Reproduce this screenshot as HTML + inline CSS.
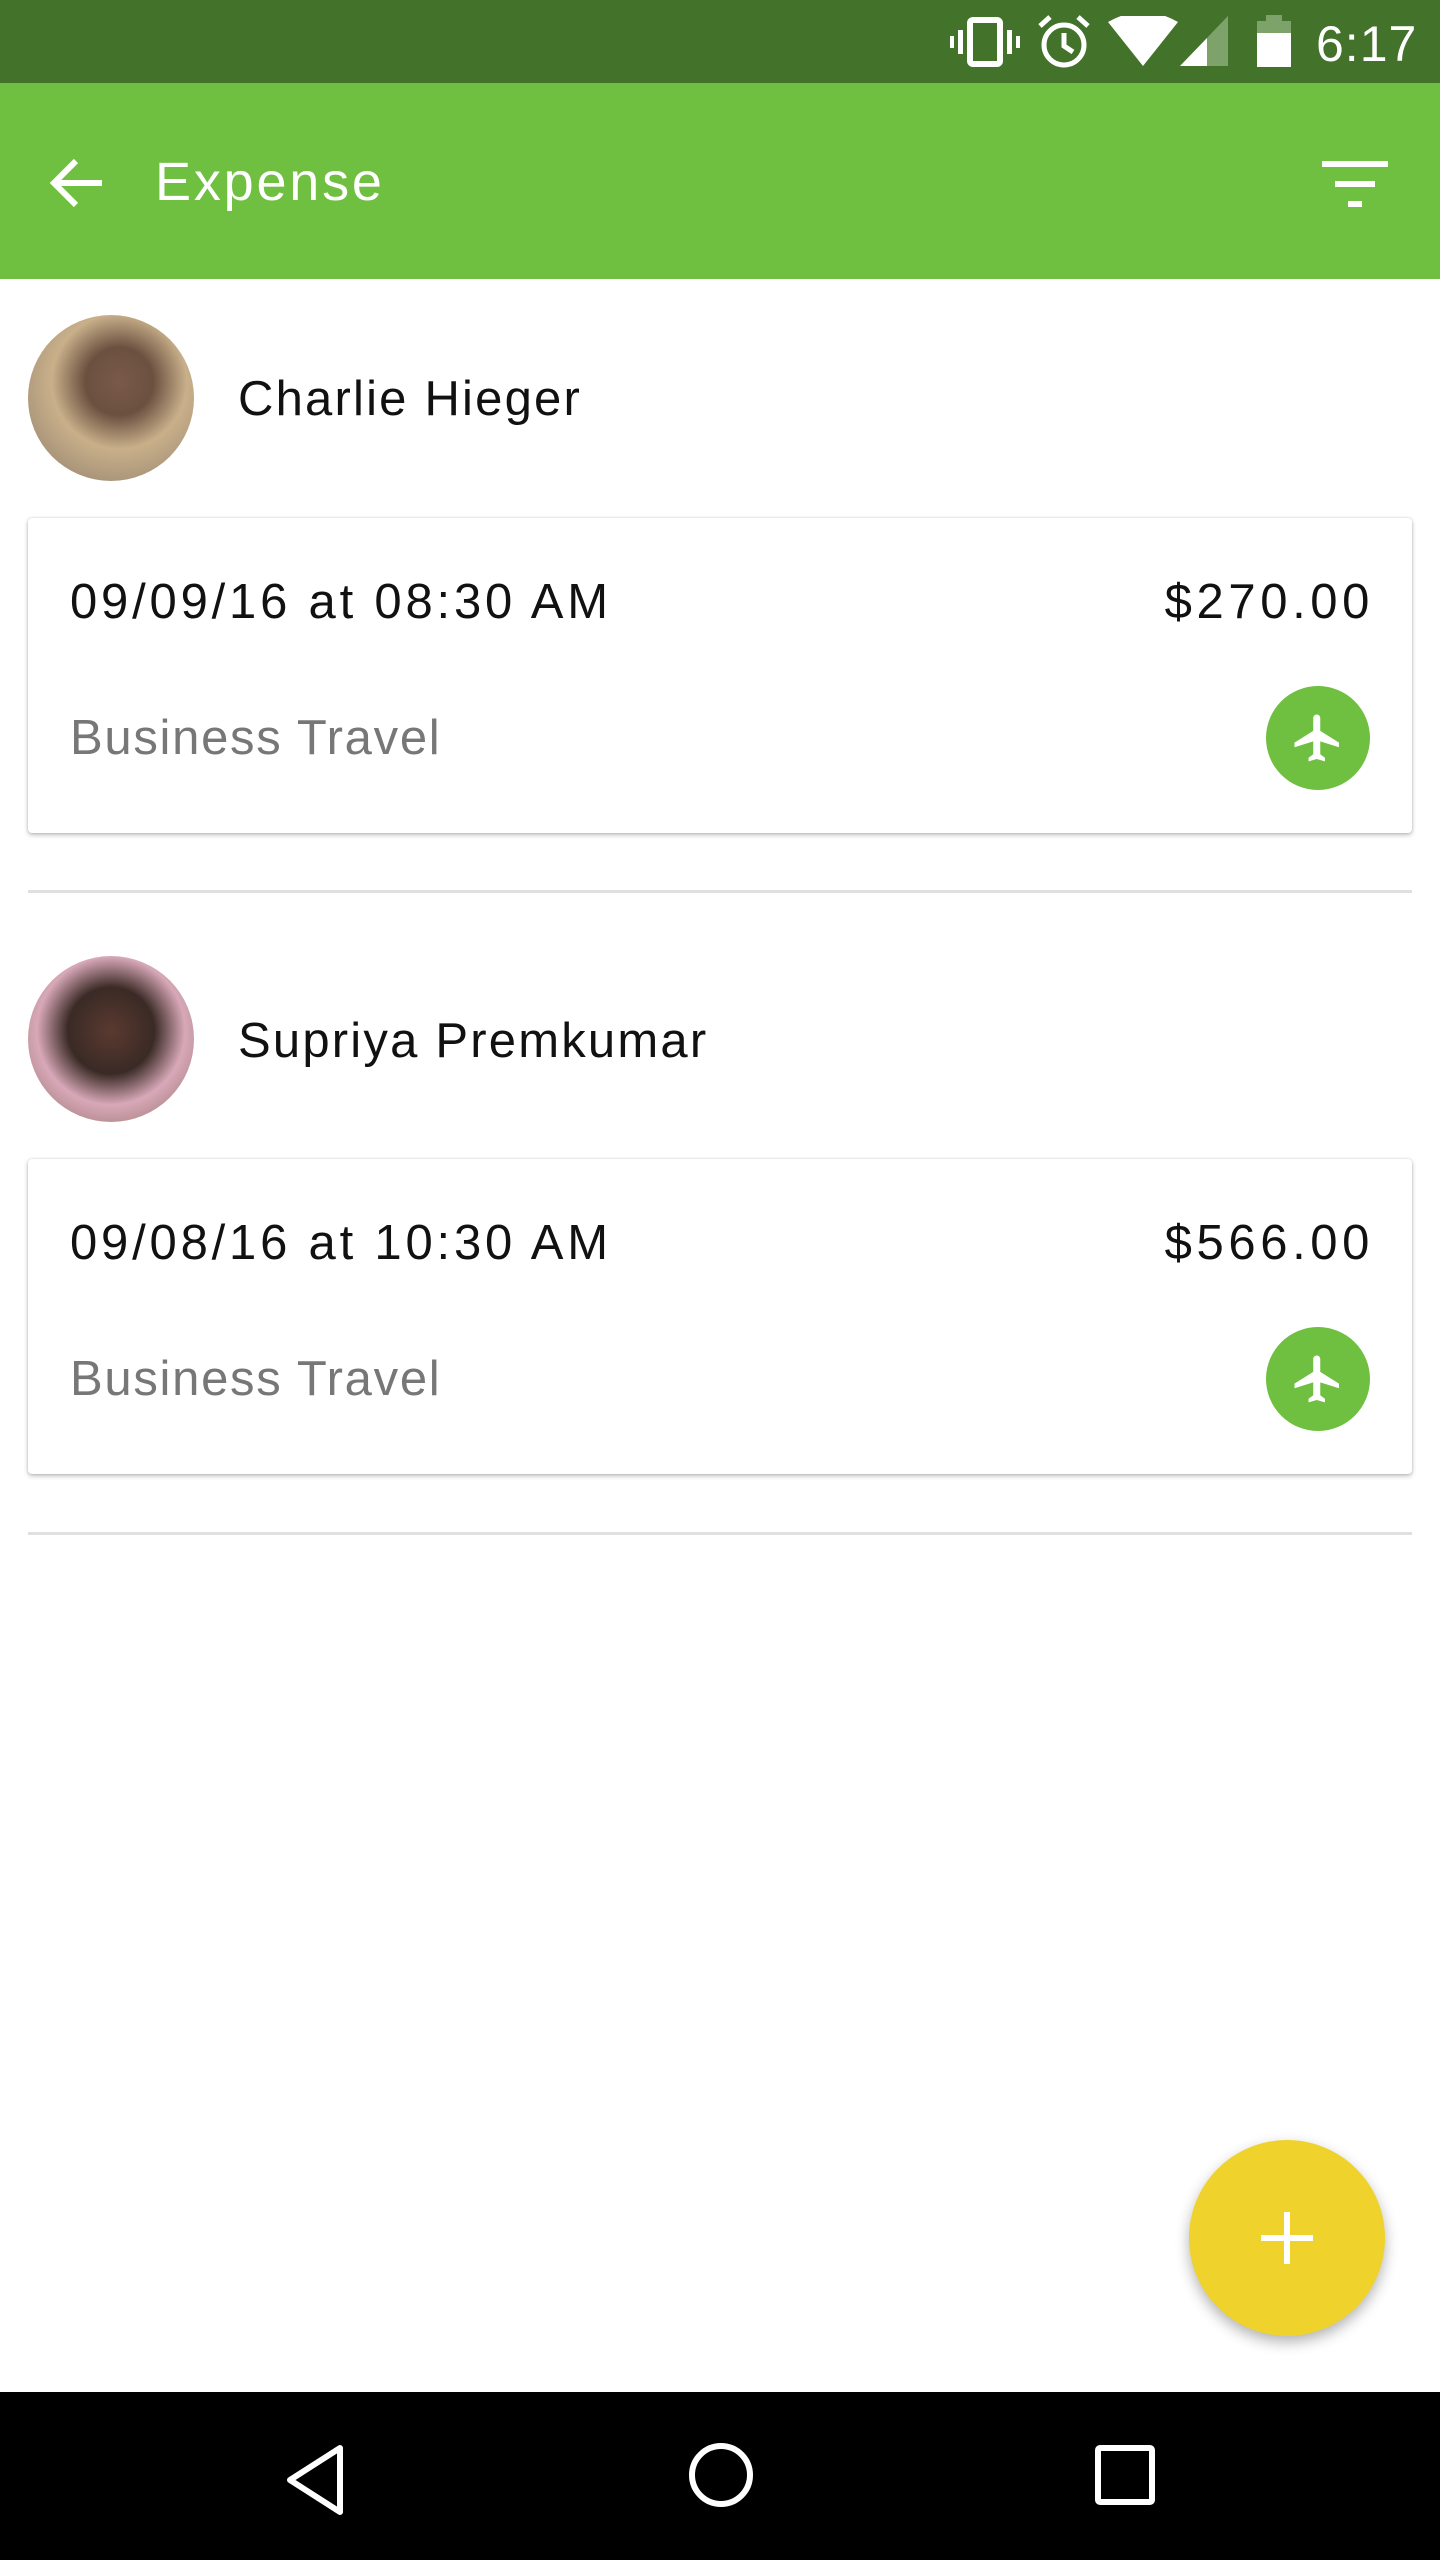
<!DOCTYPE html>
<html><head><meta charset="utf-8"><style>
*{margin:0;padding:0;box-sizing:border-box}
body{width:1440px;height:2560px;position:relative;background:#fff;font-family:"Liberation Sans",sans-serif;overflow:hidden}
.abs{position:absolute}
.status{left:0;top:0;width:1440px;height:83px;background:#43722a}
.appbar{left:0;top:83px;width:1440px;height:196px;background:#6fbf40}
.title{left:155px;font-size:54px;color:#fff;line-height:70px;letter-spacing:2.8px}
.avatar{width:166px;height:166px;border-radius:50%}
.name{font-size:49px;color:#111;line-height:60px;letter-spacing:2.2px}
.card{left:28px;width:1384px;height:315px;background:#fff;border-radius:4px;box-shadow:0 2px 5px rgba(0,0,0,.25),0 0 2px rgba(0,0,0,.15)}
.date{left:42px;top:54px;font-size:49px;color:#111;line-height:60px;letter-spacing:3.8px}
.amt{right:38px;top:54px;font-size:49px;color:#111;line-height:60px;letter-spacing:4.6px}
.cat{left:42px;top:190px;font-size:49px;color:#777;line-height:60px;letter-spacing:1.7px}
.plane{right:42px;top:168px;width:104px;height:104px;border-radius:50%;background:#6fbf40}
.div{left:28px;width:1384px;height:3px;background:#e0e0e0}
.fab{left:1189px;top:2140px;width:196px;height:196px;border-radius:50%;background:#f0d22c;box-shadow:0 6px 14px rgba(0,0,0,.3)}
.nav{left:0;top:2392px;width:1440px;height:168px;background:#000}
</style></head><body>
<div class="abs status">
<svg class="abs" style="left:950px;top:14px" width="70" height="56" viewBox="0 0 70 56"><rect x="20" y="6" width="30" height="44" rx="3" fill="none" stroke="#fff" stroke-width="6"/><rect x="8" y="16" width="5" height="24" fill="#fff"/><rect x="57" y="16" width="5" height="24" fill="#fff"/><rect x="0" y="22" width="4" height="12" fill="#fff"/><rect x="66" y="22" width="4" height="12" fill="#fff"/></svg>
<svg class="abs" style="left:1036px;top:12px" width="56" height="60" viewBox="0 0 56 60"><circle cx="28" cy="33" r="20" fill="none" stroke="#fff" stroke-width="5"/><path d="M28 21v13l9 6" stroke="#fff" stroke-width="5" fill="none"/><path d="M4 14l10-9M52 14l-10-9" stroke="#fff" stroke-width="5"/></svg>
<svg class="abs" style="left:1108px;top:16px" width="70" height="50" viewBox="0 0 70 50"><path d="M0 6 Q35 -14 70 6 L35 50Z" fill="#fff"/></svg>
<svg class="abs" style="left:1180px;top:16px" width="48" height="50" viewBox="0 0 48 50"><path d="M0 50L48 0V50Z" fill="#7da36b"/><path d="M0 50L27 22V50Z" fill="#fff"/></svg>
<svg class="abs" style="left:1257px;top:15px" width="34" height="52" viewBox="0 0 34 52"><rect x="9" y="0" width="16" height="6" fill="#7da36b"/><rect x="0" y="6" width="34" height="12" fill="#7da36b"/><rect x="0" y="18" width="34" height="34" fill="#fff"/></svg>
<div class="abs" style="left:1316px;top:14px;font-size:50px;color:#fff;line-height:60px;letter-spacing:1px">6:17</div>
</div>
<div class="abs appbar">
<svg class="abs" style="left:46px;top:70px" width="60" height="60" viewBox="0 0 60 60"><path d="M56 30H8M30 8L8 30l22 22" stroke="#fff" stroke-width="6" fill="none"/></svg>
<div class="abs title" style="top:64px">Expense</div>
<svg class="abs" style="left:1322px;top:78px" width="66" height="46" viewBox="0 0 66 46"><rect x="0" y="0" width="66" height="6" fill="#fff"/><rect x="13" y="20" width="40" height="6" fill="#fff"/><rect x="26" y="40" width="14" height="6" fill="#fff"/></svg>
</div>

<div class="abs avatar" style="left:28px;top:315px;background:radial-gradient(circle at 55% 40%,#7a5a4a 0,#6b5040 25%,#c9b08a 50%,#8a7a6a 100%)"></div>
<div class="abs name" style="left:238px;top:369px">Charlie Hieger</div>
<div class="abs card" style="top:518px">
<div class="abs date">09/09/16 at 08:30 AM</div><div class="abs amt">$270.00</div>
<div class="abs cat">Business Travel</div>
<div class="abs plane"><svg width="104" height="104" viewBox="0 0 24 24"><path transform="translate(5.5 5.5) scale(0.54)" d="M21 16v-2l-8-5V3.5c0-.83-.67-1.5-1.5-1.5S10 2.67 10 3.5V9l-8 5v2l8-2.5V19l-2 1.5V22l3.5-1 3.5 1v-1.5L13 19v-5.5l8 2.5z" fill="#fff"/></svg></div>
</div>
<div class="abs div" style="top:890px"></div>

<div class="abs avatar" style="left:28px;top:956px;background:radial-gradient(circle at 50% 45%,#5a3a30 0,#3a2a25 35%,#d8a8b8 60%,#8a6a60 100%)"></div>
<div class="abs name" style="left:238px;top:1011px">Supriya Premkumar</div>
<div class="abs card" style="top:1159px">
<div class="abs date">09/08/16 at 10:30 AM</div><div class="abs amt">$566.00</div>
<div class="abs cat">Business Travel</div>
<div class="abs plane"><svg width="104" height="104" viewBox="0 0 24 24"><path transform="translate(5.5 5.5) scale(0.54)" d="M21 16v-2l-8-5V3.5c0-.83-.67-1.5-1.5-1.5S10 2.67 10 3.5V9l-8 5v2l8-2.5V19l-2 1.5V22l3.5-1 3.5 1v-1.5L13 19v-5.5l8 2.5z" fill="#fff"/></svg></div>
</div>
<div class="abs div" style="top:1532px"></div>

<div class="abs fab"><svg width="196" height="196" viewBox="0 0 196 196"><path d="M98 72v52M72 98h52" stroke="#fff" stroke-width="6"/></svg></div>

<div class="abs nav">
<svg class="abs" style="left:280px;top:48px" width="70" height="80" viewBox="0 0 70 80"><path d="M60 8L10 40l50 32Z" fill="none" stroke="#fff" stroke-width="6" stroke-linejoin="round"/></svg>
<svg class="abs" style="left:686px;top:48px" width="70" height="70" viewBox="0 0 70 70"><circle cx="35" cy="35" r="29" fill="none" stroke="#fff" stroke-width="6"/></svg>
<svg class="abs" style="left:1094px;top:52px" width="62" height="62" viewBox="0 0 62 62"><rect x="4" y="4" width="54" height="54" rx="2" fill="none" stroke="#fff" stroke-width="6"/></svg>
</div>
</body></html>
